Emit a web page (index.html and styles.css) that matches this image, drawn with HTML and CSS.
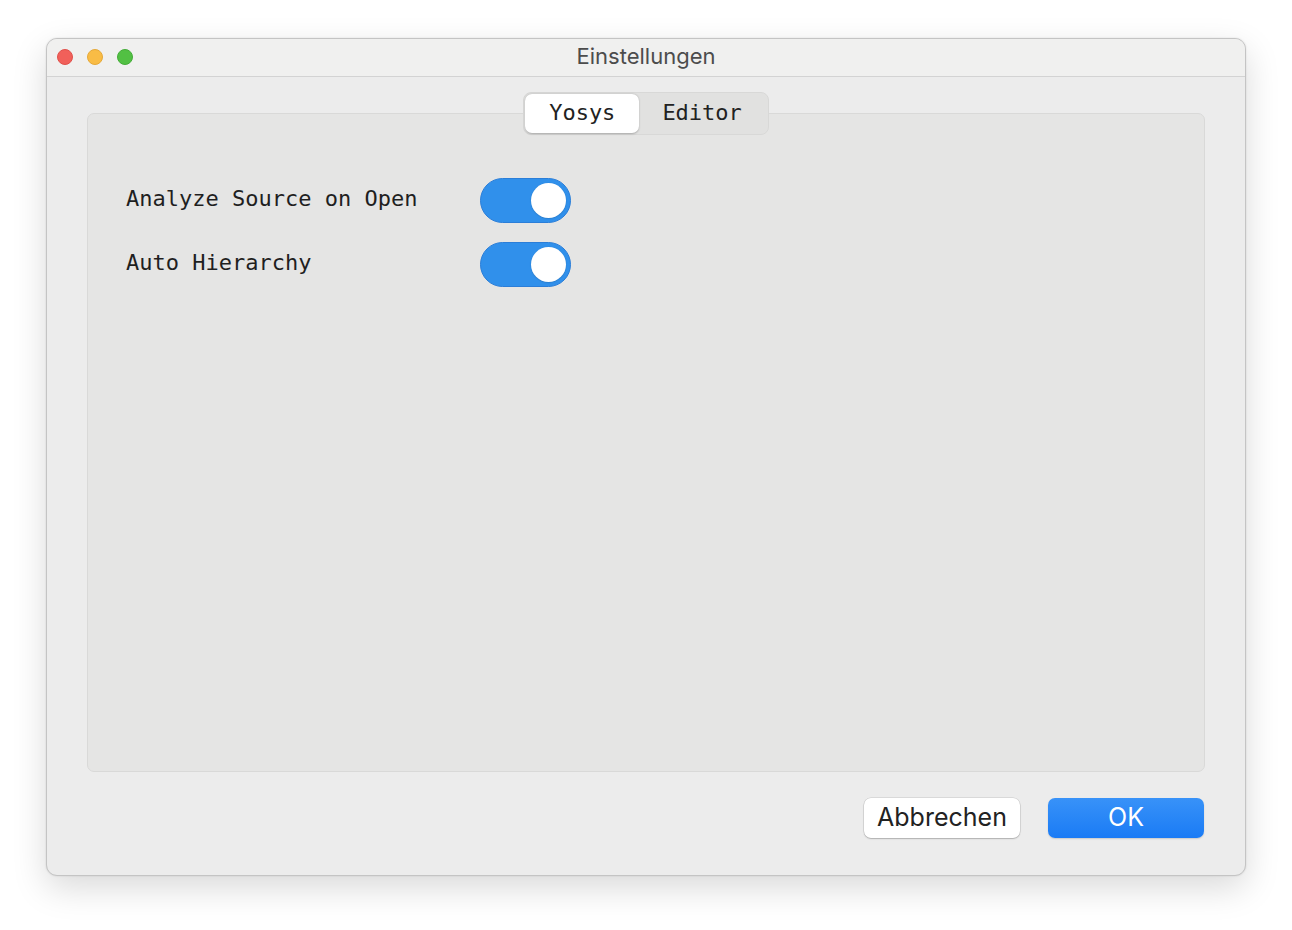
FILE: index.html
```html
<!DOCTYPE html>
<html lang="de">
<head>
<meta charset="utf-8">
<title>Einstellungen</title>
<link rel="stylesheet" href="styles.css">
</head>
<body>
<div class="window">
  <div class="titlebar">
    <div class="lights">
      <span class="light red"></span>
      <span class="light yellow"></span>
      <span class="light green"></span>
    </div>
    <div class="title">Einstellungen</div>
  </div>
  <div class="content">
    <div class="tabs">
      <div class="seg active">Yosys</div>
      <div class="seg">Editor</div>
    </div>
    <div class="panel">
      <div class="rows">
        <div class="label">Analyze Source on Open</div>
        <div class="toggle"><span class="knob"></span></div>
        <div class="label">Auto Hierarchy</div>
        <div class="toggle"><span class="knob"></span></div>
      </div>
    </div>
    <div class="buttons">
      <div class="btn cancel">Abbrechen</div>
      <div class="btn ok">OK</div>
    </div>
  </div>
</div>
</body>
</html>
```

FILE: styles.css
```css
html, body {
  margin: 0;
  padding: 0;
  background: #ffffff;
}
body {
  width: 1292px;
  height: 930px;
  padding-top: 38px;
  padding-left: 46px;
  box-sizing: border-box;
  font-family: Inter, "Liberation Sans", sans-serif;
}
.window {
  width: 1200px;
  height: 838px;
  box-sizing: border-box;
  border: 1px solid #c4c4c4;
  border-radius: 11px;
  background: #ececec;
  box-shadow: 0 12px 34px rgba(0, 0, 0, 0.15), 0 0 2px rgba(0, 0, 0, 0.12);
  display: flex;
  flex-direction: column;
  overflow: hidden;
}
.titlebar {
  height: 38px;
  box-sizing: border-box;
  border-bottom: 1px solid #d3d3d3;
  background: #f0f0ef;
  position: relative;
  display: flex;
  align-items: center;
  justify-content: center;
}
.lights {
  position: absolute;
  left: 10px;
  top: 10px;
  display: flex;
  gap: 14px;
}
.light {
  width: 16px;
  height: 16px;
  border-radius: 50%;
  box-sizing: border-box;
}
.red { background: #f1605a; border: 1px solid #e0504a; }
.yellow { background: #f9bc45; border: 1px solid #e5a838; }
.green { background: #52c043; border: 1px solid #44ac38; }
.title {
  font-size: 22px;
  color: #4c4c4c;
  margin-top: -4px;
}
.content {
  flex: 1;
  display: flex;
  flex-direction: column;
  padding: 15px 40px 0 40px;
}
.tabs {
  align-self: center;
  position: relative;
  z-index: 1;
  display: flex;
  height: 43px;
  box-sizing: border-box;
  padding: 1px;
  background: #e1e1e0;
  border: 1px solid #d8d8d7;
  border-radius: 8px;
  font-family: "DejaVu Sans Mono", monospace;
  font-size: 22px;
  color: #222222;
}
.seg {
  padding: 0 24px 2px 24px;
  display: flex;
  align-items: center;
  border-radius: 7px;
}
.seg.active {
  background: #ffffff;
  box-shadow: 0 0.5px 2px rgba(0, 0, 0, 0.25);
}
.seg + .seg {
  padding-left: 23px;
  padding-right: 25px;
}
.panel {
  margin-top: -22px;
  height: 659px;
  box-sizing: border-box;
  border: 1px solid #d9d9d8;
  border-radius: 7px;
  background: #e5e5e4;
  padding: 64px 0 0 38px;
}
.rows {
  display: grid;
  grid-template-columns: 354px 91px;
  row-gap: 19px;
  align-items: center;
}
.label {
  font-family: "DejaVu Sans Mono", monospace;
  font-size: 22px;
  color: #1f1f1f;
  margin-top: -4px;
}
.toggle {
  width: 91px;
  height: 45px;
  box-sizing: border-box;
  border: 1px solid #2b7ed8;
  border-radius: 23px;
  background: #3090eb;
  display: flex;
  align-items: center;
  justify-content: flex-end;
  padding-right: 4px;
}
.knob {
  width: 35px;
  height: 35px;
  border-radius: 50%;
  background: #ffffff;
  box-shadow: 0 0.5px 1.5px rgba(0, 0, 0, 0.2);
}
.buttons {
  margin-top: 26px;
  display: flex;
  justify-content: flex-end;
  gap: 28px;
  padding-right: 1px;
}
.btn {
  height: 40px;
  box-sizing: border-box;
  border-radius: 7px;
  display: flex;
  align-items: center;
  justify-content: center;
  font-size: 25px;
  padding-bottom: 2px;
}
.cancel {
  width: 156px;
  background: #ffffff;
  color: #222222;
  box-shadow: 0 0 0 0.5px rgba(0, 0, 0, 0.15), 0 1px 1.5px rgba(0, 0, 0, 0.2);
}
.ok {
  width: 156px;
  color: #ffffff;
  background: linear-gradient(#3892f8, #1a7bf5);
  box-shadow: 0 1px 1.5px rgba(0, 0, 0, 0.15);
}
```
